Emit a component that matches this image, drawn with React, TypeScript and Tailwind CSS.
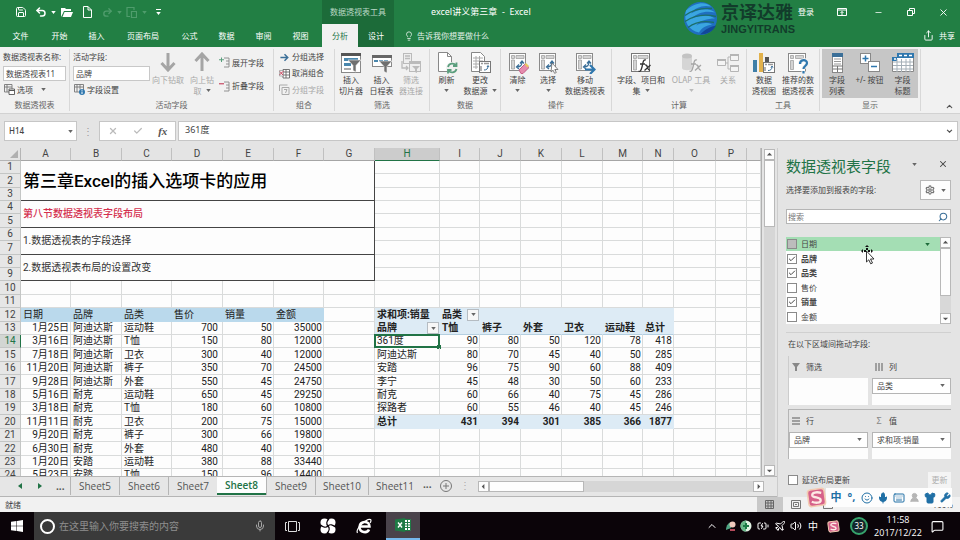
import { useState } from 'react';
import type { ReactNode } from 'react';
import clsx from 'clsx';
import {
  ChevronUp,
  Keyboard,
  Lightbulb,
  MessageSquare,
  Mic,
  Minus,
  Plane,
  Redo2,
  Save,
  Search,
  Settings,
  Share,
  Shirt,
  Smile,
  Undo2,
  UserRound,
  Volume2,
  Wrench,
  X,
  Check,
  BatteryCharging
} from 'lucide-react';

const columns = [
  { name: 'A', width: 'w-[50px]' },
  { name: 'B', width: 'w-[51px]' },
  { name: 'C', width: 'w-[50px]' },
  { name: 'D', width: 'w-[51px]' },
  { name: 'E', width: 'w-[51px]' },
  { name: 'F', width: 'w-[50px]' },
  { name: 'G', width: 'w-[51px]' },
  { name: 'H', width: 'w-[65px]' },
  { name: 'I', width: 'w-[40px]' },
  { name: 'J', width: 'w-[41px]' },
  { name: 'K', width: 'w-[41px]' },
  { name: 'L', width: 'w-[41px]' },
  { name: 'M', width: 'w-[40px]' },
  { name: 'N', width: 'w-[31px]' },
  { name: 'O', width: 'w-[42px]' },
  { name: 'P', width: 'w-[31px]' },
  { name: '', width: '' }
];

const salesHeader = ['日期', '品牌', '品类', '售价', '销量', '金额'];

const sales = [
  ['1月25日', '阿迪达斯', '运动鞋', 700, 50, 35000],
  ['3月16日', '阿迪达斯', 'T恤', 150, 80, 12000],
  ['7月18日', '阿迪达斯', '卫衣', 300, 40, 12000],
  ['11月20日', '阿迪达斯', '裤子', 350, 70, 24500],
  ['9月28日', '阿迪达斯', '外套', 550, 45, 24750],
  ['5月16日', '耐克', '运动鞋', 650, 45, 29250],
  ['3月18日', '耐克', 'T恤', 180, 60, 10800],
  ['11月11日', '耐克', '卫衣', 200, 75, 15000],
  ['9月20日', '耐克', '裤子', 300, 66, 19800],
  ['6月30日', '耐克', '外套', 480, 40, 19200],
  ['1月20日', '安踏', '运动鞋', 380, 88, 33440],
  ['5月23日', '安踏', 'T恤', 150, 96, 14400]
];

const pivotHeader = ['品牌', 'T恤', '裤子', '外套', '卫衣', '运动鞋', '总计'];

const pivot = [
  ['361度', 90, 80, 50, 120, 78, 418],
  ['阿迪达斯', 80, 70, 45, 40, 50, 285],
  ['安踏', 96, 75, 90, 60, 88, 409],
  ['李宁', 45, 48, 30, 50, 60, 233],
  ['耐克', 60, 66, 40, 75, 45, 286],
  ['探路者', 60, 55, 46, 40, 45, 246],
  ['总计', 431, 394, 301, 385, 366, 1877]
];

// Merged headings over A:G, keyed by their first row
const headings: Record<number, { text: string; span: number; className: string }> = {
  1: { text: '第三章Excel的插入选项卡的应用', span: 3, className: 'text-[17px] leading-5 font-medium text-black' },
  4: { text: '第八节数据透视表字段布局', span: 2, className: 'font-medium text-[#d4304f]' },
  6: { text: '1.数据透视表的字段选择', span: 2, className: 'text-[#333333]' },
  8: { text: '2.数据透视表布局的设置改变', span: 2, className: 'text-[#333333]' }
};

function Caret({ className = 'text-[#666666]' }: { className?: string }) {
  return (
    <svg viewBox="0 0 6 4" className={clsx('h-[3px] w-[5px] shrink-0', className)} aria-hidden="true">
      <path d="M0 0h6L3 4z" fill="currentColor" />
    </svg>
  );
}

/* ---------- Ribbon icons ---------- */

function Icon({ children, size = 'h-[22px] w-[22px]' }: { children: ReactNode; size?: string }) {
  return (
    <svg viewBox="0 0 22 22" fill="none" className={clsx('shrink-0', size)} aria-hidden="true">
      {children}
    </svg>
  );
}

function PivotBase() {
  return (
    <>
      <rect x="2.5" y="1.5" width="16" height="17" fill="#fff" stroke="#8a8a8a" />
      <path d="M4.500 3.500h3v3h-3zM9 3.500h8v3H9zM4.500 8h3v9h-3z" fill="#d4d4d4" stroke="#9a9a9a" strokeWidth=".7" />
      <path d="M10 15c3 0 5-1.500 5-5m-2 1.500L15 9l2 2.500M12 12.500 9.500 15l2.500 2" stroke="#3b6f98" strokeWidth="1.300" />
    </>
  );
}

const SlicerIcon = () => (
  <Icon>
    <rect x="1.5" y="1.500" width="19" height="19" fill="#fff" stroke="#888" />
    <path d="M1 1h20v3H1z" fill="#555" />
    <path d="M4 6h14v3H4zM4 11h7v3H4z" fill="#4a87ad" />
    <path d="M4 17h7" stroke="#aaa" strokeWidth="2" />
    <path d="M8 8h13l-5 5.500V20l-3-1.500v-5z" fill="#6f6f6f" stroke="#f1f1f1" strokeWidth=".6" />
  </Icon>
);

const TimelineIcon = () => (
  <Icon>
    <rect x="1.500" y="3.500" width="19" height="11" fill="#fff" stroke="#888" />
    <path d="M1 3h20v3H1z" fill="#666" />
    <path d="M3 9h4m1 0h4m1 0h4" stroke="#4a87ad" strokeWidth="2" />
    <path d="M8 9h13l-5 5.500V21l-3-1.500v-5z" fill="#6f6f6f" stroke="#f1f1f1" strokeWidth=".6" />
  </Icon>
);

const FilterLinkIcon = () => (
  <Icon>
    <rect x="3.500" y="1.500" width="8" height="10" fill="#eee" stroke="#bbb" />
    <path d="M5 4h5M5 6.500h5M2 9v7h6m-2-2 2 2-2 2" stroke="#bbb" strokeWidth="1.300" />
    <rect x="9.500" y="9.500" width="11" height="10" fill="#eee" stroke="#bbb" />
    <path d="M10 10h10v2H10zM12 14h8l-3 3v4l-2-1v-3z" fill="#bbb" />
  </Icon>
);

const RefreshIcon = () => (
  <Icon>
    <path d="M2.500.5h9l4 4v15h-13z" fill="#fff" stroke="#888" />
    <path d="M11.500.5v4h4" stroke="#888" />
    <circle cx="16" cy="16" r="6" fill="#f1f1f1" />
    <path d="M12 15a4.500 4.500 0 0 1 8-1.500m.5-3v3.500H17M20.500 17a4.500 4.500 0 0 1-8 1.500m-.5 3V18h3.500" stroke="#5a9e7d" strokeWidth="1.800" />
  </Icon>
);

const SourceIcon = () => (
  <Icon>
    <path d="M2.500.5h9l4 4v15h-13z" fill="#fff" stroke="#888" />
    <path d="M4 6h10M4 9h10M4 12h7M4 15h5M7 4v13M10.500 4v9" stroke="#aaa" />
    <rect x="10.500" y="9.500" width="11" height="11" fill="#fff" stroke="#777" />
    <path d="M12 11.500h2m1 0h5M12 14v5" stroke="#999" strokeWidth="1.500" />
    <path d="M15 18c2.500 0 4-1 4-4m-1 1 1-1.500 1 1.500" stroke="#3b6f98" />
  </Icon>
);

const ClearIcon = () => (
  <Icon>
    <PivotBase />
    <path d="m12 18 6-6 4 3.500-6 6h-2z" fill="#e58cae" stroke="#c45f86" />
    <path d="m17.500 12.500 1.500-1.500 3 3-1.500 1.500z" fill="#e8c65e" />
  </Icon>
);

const SelectIcon = () => (
  <Icon>
    <PivotBase />
    <path d="m15 11 6 6.500h-3.200l1.500 3-1.700.8-1.500-3L14 20z" fill="#fff" stroke="#666" strokeWidth=".8" />
  </Icon>
);

const MoveIcon = () => (
  <Icon>
    <PivotBase />
    <path d="M11 17.500h9m-4-4.500 4.500 4.500L16 22" stroke="#2f77ae" strokeWidth="2.200" />
  </Icon>
);

const FieldsIcon = () => (
  <Icon>
    <rect x="1.500" y="1.500" width="18" height="18" fill="#fff" stroke="#777" />
    <path d="M3.500 3.500h3v3h-3zM8 3.500h10v3H8zM3.500 8h3v10h-3z" fill="#d4d4d4" stroke="#9a9a9a" strokeWidth=".7" />
    <path d="M16 8c-3-1-3 3-4 7s-2 5-3.500 4M10 12h5M15 13c3-1 2 6 5 5M20.500 13l-6 5.500" stroke="#333" strokeWidth="1.300" />
  </Icon>
);

const OlapIcon = () => (
  <Icon>
    <path d="M2 4v12c0 3 10 3 10 0V4" fill="#d5d5d5" />
    <ellipse cx="7" cy="4" rx="5" ry="2.500" fill="#c3c3c3" />
    <path d="M17 8c-3-1-3 3-4 7s-2 5-3.500 4M11 12h5M16 13c3-1 2 6 5 5M21 13l-6 5.500" stroke="#a5a5a5" strokeWidth="1.300" />
  </Icon>
);

const RelationIcon = () => (
  <Icon>
    <path d="M8 11h3V5h2M11 11v6h2" stroke="#b5b5b5" />
    <path d="M.5 7.500h8v6h-8zM13.500 2.500h8v6h-8zM13.500 13.500h8v6h-8z" fill="#f4f4f4" stroke="#b5b5b5" />
    <path d="M0 7h9v2H0zM13 2h9v2h-9zM13 13h9v2h-9z" fill="#b5b5b5" />
  </Icon>
);

const ChartIcon = () => (
  <Icon>
    <path d="M0 8h4v12H0z" fill="#3f7fa8" />
    <path d="M6 1h4v19H6z" fill="#e2b14b" />
    <path d="M12 5h4v6h-4z" fill="#555" />
    <rect x="10.500" y="10.500" width="11" height="10" fill="#fff" stroke="#777" />
    <path d="M12 12.500h2m1 0h5M12 15v4" stroke="#999" strokeWidth="1.500" />
    <path d="M15 18.500c2.500 0 4-1 4-4m-1 1 1-1.500 1 1.500" stroke="#3b6f98" />
  </Icon>
);

const RecommendIcon = () => (
  <Icon>
    <rect x="1.500" y="1.500" width="17" height="18" fill="#fff" stroke="#888" />
    <path d="M3.500 3.500h3v3h-3zM8.500 3.500h8v3h-8zM3.500 8.500h3v9h-3z" fill="#d4d4d4" stroke="#999" strokeWidth=".7" />
    <path d="M13 12c0-5 7-5 7-1 0 3-3.500 3-3.500 6M16.500 19v2.500" stroke="#f1f1f1" strokeWidth="4" />
    <path d="M13 12c0-5 7-5 7-1 0 3-3.500 3-3.500 6M16.500 19v2.500" stroke="#2f77ae" strokeWidth="2.200" />
  </Icon>
);

const FieldListIcon = () => (
  <Icon>
    <rect x="6.500" y="1.500" width="10" height="19" fill="#fff" stroke="#888" />
    <path d="M6 1h11v4H6z" fill="#3b6f98" />
    <path d="M8 7h7M8 9.500h7M8 12h7" stroke="#999" />
    <path d="M6 14h11M11.500 14v6M7 17h10" stroke="#777" />
  </Icon>
);

const PlusMinusIcon = () => (
  <Icon>
    <rect x="1.500" y="1.500" width="10" height="10" fill="#fff" stroke="#888" />
    <rect x="9.500" y="9.500" width="11" height="10" fill="#fff" stroke="#888" />
    <path d="M6.500 3.500v6M3.500 6.500h6M12 14.500h6" stroke="#2f77ae" strokeWidth="1.500" />
  </Icon>
);

const FieldHeadersIcon = () => (
  <Icon>
    <path d="M.5 5.500h21v14H.5z" fill="#fff" stroke="#888" />
    <path d="M0 5h5V1h17v5H5v3H0z" fill="#2f77ae" />
    <path d="M7 3.500h3m2 0h3m2 0h3M2 7h2" stroke="#fff" strokeWidth="1.500" />
    <path d="M1 10h20M1 13.500h20M1 17h20M5 7v13M9.500 7v13M14 7v13M18 7v13" stroke="#a5b0b8" />
  </Icon>
);

const OptionsIcon = () => (
  <Icon size="h-[11px] w-[11px]">
    <path d="M1 1h15v15H1zM1 6h15M6 1v15" stroke="#777" strokeWidth="1.800" />
    <path d="M10 10h11v11H10z" fill="#fff" stroke="#555" strokeWidth="1.800" />
    <path d="M10 13h11" stroke="#555" strokeWidth="2" />
  </Icon>
);

const FieldSettingsIcon = () => (
  <Icon size="h-[11px] w-[11px]">
    <path d="M1 1h18v15H1zM1 6h18M6 1v15M12 1v10" stroke="#777" strokeWidth="1.800" />
    <circle cx="16" cy="16" r="6" fill="#2f77ae" />
    <path d="M16 15v5M16 11.500v2" stroke="#fff" strokeWidth="2" />
  </Icon>
);

function OutlineIcon({ plus }: { plus?: boolean }) {
  return (
    <Icon size="h-[11px] w-[11px]">
      <path d="M10 2h10M14 8h6M14 14h6M10 20h10M20 2v18" stroke="#888" strokeWidth="1.800" />
      {plus ? (
        <path d="M5 1v9M0 5.500h10" stroke="#5a9e7d" strokeWidth="2" />
      ) : (
        <path d="M0 5.500h10" stroke="#c8506a" strokeWidth="2.500" />
      )}
    </Icon>
  );
}

const GroupArrowIcon = () => (
  <Icon size="h-[9px] w-[9px]">
    <path d="M1 11h18M11 3l8 8-8 8" stroke="#3b6f98" strokeWidth="3.500" />
  </Icon>
);

const UngroupIcon = () => (
  <Icon size="h-[11px] w-[11px]">
    <path d="M8 3h13v17H8zM8 8h13M8 14h13M14 3v17" fill="#fff" stroke="#666" strokeWidth="1.800" />
    <path d="M1 5h8v11H1z" fill="#f1f1f1" stroke="#777" />
    <path d="m1 14 8-8M2 7l6 7" stroke="#c8405a" strokeWidth="2" />
  </Icon>
);

const GroupFieldIcon = () => (
  <Icon size="h-[11px] w-[11px]">
    <path d="M1 14V2h16M6 7h14v14H6z" stroke="#aaa" strokeWidth="2" />
    <path d="M10 11h6l-3 7" stroke="#aaa" strokeWidth="2" />
  </Icon>
);

function BigArrow({ up }: { up?: boolean }) {
  return (
    <svg viewBox="0 0 16 20" fill="none" className="mb-[2px] h-5 w-4" aria-hidden="true">
      {up ? (
        <path d="M8 19V3M1.500 9 8 2l6.500 7" stroke="#a5a5a5" strokeWidth="3" />
      ) : (
        <path d="M8 1v16M1.500 11 8 18l6.500-7" stroke="#a5a5a5" strokeWidth="3" />
      )}
    </svg>
  );
}

/* ---------- Ribbon parts ---------- */

function RibbonGroup({ label, width, children }: { label: string; width: string; children: ReactNode }) {
  return (
    <section aria-label={label} className={clsx('flex shrink-0 flex-col py-[2px]', width)}>
      <div className="flex min-h-0 flex-1 border-r border-[#d8d8d8]">{children}</div>
      <div className="h-[13px] border-r border-[#d8d8d8] text-center leading-[13px] text-[#666666]">{label}</div>
    </section>
  );
}

interface BigButtonProps {
  icon: ReactNode;
  lines: string[];
  width: string;
  disabled?: boolean;
  menu?: boolean;
}

function BigButton({ icon, lines, width, disabled, menu }: BigButtonProps) {
  return (
    <button
      disabled={disabled}
      className={clsx(
        'flex shrink-0 flex-col items-center pt-[3px] leading-[11px] whitespace-nowrap',
        width,
        disabled ? 'text-[#a8a8a8]' : 'text-[#444444]'
      )}
    >
      {icon}
      {lines.map((line, i) => (
        <span key={line} className="flex items-center gap-1">
          {line}
          {menu && lines.length === 2 && i === 1 && <Caret />}
        </span>
      ))}
      {menu && lines.length === 1 && (
        <span className="pt-1">
          <Caret className={disabled ? 'text-[#bbbbbb]' : 'text-[#666666]'} />
        </span>
      )}
    </button>
  );
}

function SmallButton({ icon, text, disabled, menu }: { icon: ReactNode; text: string; disabled?: boolean; menu?: boolean }) {
  return (
    <button
      disabled={disabled}
      className={clsx('flex items-center gap-[2px] whitespace-nowrap', disabled ? 'text-[#a8a8a8]' : 'text-[#444444]')}
    >
      <span className="flex w-[12px] justify-center">{icon}</span>
      {text}
      {menu && (
        <span className="pl-[6px]">
          <Caret />
        </span>
      )}
    </button>
  );
}

function Ribbon() {
  return (
    <div className="flex h-[67px] shrink-0 overflow-hidden border-b border-[#d2d2d2] bg-[#f1f1f1]">
      <RibbonGroup label="数据透视表" width="w-[70px]">
        <div className="flex w-full flex-col pt-[2px] pr-[3px] pl-[3px]">
          <label htmlFor="pivot-name" className="h-[15px] leading-[11px] whitespace-nowrap">数据透视表名称:</label>
          <input id="pivot-name" defaultValue="数据透视表11" className="h-[15px] w-full border border-[#c8c8c8] bg-white px-[2px]" />
          <div className="flex h-[17px] items-center">
            <SmallButton icon={<OptionsIcon />} text="选项" menu />
          </div>
        </div>
      </RibbonGroup>

      <RibbonGroup label="活动字段" width="w-[204px]">
        <div className="flex w-[80px] flex-col pt-[2px] pl-[3px]">
          <label htmlFor="active-field" className="h-[15px] leading-[11px]">活动字段:</label>
          <input id="active-field" defaultValue="品牌" className="h-[15px] w-full border border-[#c8c8c8] bg-white px-[2px]" />
          <div className="flex h-[17px] items-center">
            <SmallButton icon={<FieldSettingsIcon />} text="字段设置" />
          </div>
        </div>
        <BigButton icon={<BigArrow />} lines={['向下钻取']} width="w-[36px]" disabled />
        <BigButton icon={<BigArrow up />} lines={['向上钻', '取']} width="w-[32px]" disabled menu />
        <div className="flex flex-col justify-around pt-[2px]">
          <SmallButton icon={<OutlineIcon plus />} text="展开字段" />
          <SmallButton icon={<OutlineIcon />} text="折叠字段" />
        </div>
      </RibbonGroup>

      <RibbonGroup label="组合" width="w-[61px]">
        <div className="flex flex-col justify-around pl-[4px]">
          <SmallButton icon={<GroupArrowIcon />} text="分组选择" />
          <SmallButton icon={<UngroupIcon />} text="取消组合" />
          <SmallButton icon={<GroupFieldIcon />} text="分组字段" disabled />
        </div>
      </RibbonGroup>

      <RibbonGroup label="筛选" width="w-[95px]">
        <BigButton icon={<SlicerIcon />} lines={['插入', '切片器']} width="w-[32px]" />
        <BigButton icon={<TimelineIcon />} lines={['插入', '日程表']} width="w-[29px]" />
        <BigButton icon={<FilterLinkIcon />} lines={['筛选', '器连接']} width="w-[30px]" disabled />
      </RibbonGroup>

      <RibbonGroup label="数据" width="w-[71px]">
        <BigButton icon={<RefreshIcon />} lines={['刷新']} width="w-[33px]" menu />
        <BigButton icon={<SourceIcon />} lines={['更改', '数据源']} width="w-[34px]" menu />
      </RibbonGroup>

      <RibbonGroup label="操作" width="w-[111px]">
        <BigButton icon={<ClearIcon />} lines={['清除']} width="w-[33px]" menu />
        <BigButton icon={<SelectIcon />} lines={['选择']} width="w-[28px]" menu />
        <BigButton icon={<MoveIcon />} lines={['移动', '数据透视表']} width="w-[46px]" />
      </RibbonGroup>

      <RibbonGroup label="计算" width="w-[135px]">
        <BigButton icon={<FieldsIcon />} lines={['字段、项目和', '集']} width="w-[58px]" menu />
        <BigButton icon={<OlapIcon />} lines={['OLAP 工具']} width="w-[42px]" disabled menu />
        <BigButton icon={<RelationIcon />} lines={['关系']} width="w-[32px]" disabled />
      </RibbonGroup>

      <RibbonGroup label="工具" width="w-[73px]">
        <BigButton icon={<ChartIcon />} lines={['数据', '透视图']} width="w-[34px]" />
        <BigButton icon={<RecommendIcon />} lines={['推荐的数', '据透视表']} width="w-[34px]" />
      </RibbonGroup>

      <RibbonGroup label="显示" width="w-[101px]">
        <div className="mx-[2px] flex bg-[#c6c6c6]">
          <BigButton icon={<FieldListIcon />} lines={['字段', '列表']} width="w-[30px]" />
          <BigButton icon={<PlusMinusIcon />} lines={['+/- 按钮']} width="w-[35px]" />
          <BigButton icon={<FieldHeadersIcon />} lines={['字段', '标题']} width="w-[31px]" />
        </div>
      </RibbonGroup>

      <button aria-label="折叠功能区" className="mt-auto mr-[6px] mb-[2px] ml-auto text-[#555555]">
        <ChevronUp size={9} strokeWidth={3} />
      </button>
    </div>
  );
}

/* ---------- Title bar and tabs ---------- */

function TitleBar() {
  return (
    <div className="flex h-6 items-center text-white">
      <div className="flex w-[322px] shrink-0 items-center pl-[15px]">
        <button aria-label="保存"><Save size={12} /></button>
        <button aria-label="撤消" className="ml-[8px] flex items-center gap-[4px]">
          <Undo2 size={12} strokeWidth={3} />
          <Caret className="text-white" />
        </button>
        <button aria-label="打开" className="ml-[5px]">
          <svg viewBox="0 0 12 10" className="h-[10px] w-[12px]" aria-hidden="true">
            <path d="M0 10V1h4l1 1h5v2H3z" fill="currentColor" />
            <path d="M3.500 5H12l-2 5H1.500z" fill="currentColor" />
          </svg>
        </button>
        <button aria-label="新建" className="ml-[10px]">
          <svg viewBox="0 0 9 12" fill="none" className="h-[12px] w-[9px]" aria-hidden="true">
            <path d="M.5.5H5L8.500 4v7.500h-8zM5 .5V4h3.500" stroke="currentColor" />
          </svg>
        </button>
        <button aria-label="恢复" disabled className="ml-[10px] flex items-center gap-[4px] text-[#4f9c6c]">
          <Redo2 size={11} strokeWidth={3} />
          <Caret className="text-[#4f9c6c]" />
        </button>
        <button aria-label="粘贴" disabled className="ml-[4px] flex items-center gap-[5px] text-[#4f9c6c]">
          <svg viewBox="0 0 11 12" fill="none" className="h-[12px] w-[11px]" aria-hidden="true">
            <path d="M4 10.500H1v-9h7V4M3 1.500h3M5.500 5.500h5v6h-5z" stroke="currentColor" strokeWidth="1.200" />
          </svg>
          <Caret className="text-[#4f9c6c]" />
        </button>
        <button aria-label="自定义快速访问工具栏" className="ml-[9px] flex flex-col items-center gap-[2px]">
          <span className="h-px w-[5px] bg-white" />
          <Caret className="text-white" />
        </button>
      </div>
      <div className="flex h-6 w-[72px] shrink-0 items-center justify-center bg-[#1c6b39] text-[#b9d8c5]">数据透视表工具</div>
      <h1 className="flex-1 pl-[37px] text-[9px] whitespace-pre">excel讲义第三章  -  Excel</h1>
      <button className="mr-[23px]">登录</button>
      <button aria-label="功能区显示选项" className="mr-[27px]">
        <svg viewBox="0 0 10 8" fill="none" className="h-2 w-[10px]" aria-hidden="true">
          <path d="M.5.5h9v7h-9zM.5 2h9M5 7V3.500M3.500 5 5 3.500 6.500 5" stroke="currentColor" />
        </svg>
      </button>
      <button aria-label="最小化" className="mr-[24px]"><Minus size={9} /></button>
      <button aria-label="向下还原" className="mr-[23px]">
        <svg viewBox="0 0 8 8" fill="none" className="h-2 w-2" aria-hidden="true">
          <path d="M.5 2.500h5v5h-5zM2.500 2V.5h5v5H6" stroke="currentColor" />
        </svg>
      </button>
      <button aria-label="关闭" className="mr-[11px]"><X size={11} /></button>
    </div>
  );
}

function MenuTabs() {
  return (
    <nav className="flex h-[23px] items-stretch text-white">
      <button className="w-[41px]">文件</button>
      <button className="w-[37px]">开始</button>
      <button className="w-[37px]">插入</button>
      <button className="w-[56px]">页面布局</button>
      <button className="w-[37px]">公式</button>
      <button className="w-[37px]">数据</button>
      <button className="w-[37px]">审阅</button>
      <button className="mr-[3px] w-[37px]">视图</button>
      <button className="w-[36px] bg-[#f1f1f1] text-[#217346]">分析</button>
      <button className="w-[36px] bg-[#1c6b39]">设计</button>
      <button className="ml-[10px] flex items-center gap-[3px] text-[#e3f1e8]">
        <Lightbulb size={10} />
        告诉我你想要做什么
      </button>
      <button className="mr-[5px] ml-auto flex items-center gap-[5px]">
        <Share size={11} />
        共享
      </button>
    </nav>
  );
}

function Watermark() {
  return (
    <div className="absolute top-0 right-[165px] flex items-center gap-[3px] text-[#123c2b]">
      <svg viewBox="0 0 35 35" className="h-[36px] w-[35px]" aria-hidden="true">
        <circle cx="17.500" cy="18" r="16.500" fill="#1f6fc0" />
        <path d="M3 10C12 1 24 1 28 6 20 4 12 7 8 13c8-5 18-6 24-1-9-2-18 0-23 6 8-4 17-4 23 0-8 0-15 2-19 7 6-3 12-3 16-1-6 1-10 3-13 8C6 30 0 21 3 10z" fill="#3aa6e0" />
        <path d="M2 15c8-6 16-8 27-7M2 21c9-6 19-8 31-5M5 27c8-6 16-7 26-5" stroke="#1c6f6a" strokeWidth="1.300" fill="none" />
        <path d="M17 34c6-6 11-8 16-9-3 6-9 9-16 9z" fill="#12479a" />
      </svg>
      <div className="flex flex-col">
        <span className="text-[18px] leading-[22px] font-bold">京译达雅</span>
        <span className="font-['Liberation_Sans'] text-[11px] leading-[12px] font-bold">JINGYITRANS</span>
      </div>
    </div>
  );
}

/* ---------- Formula bar ---------- */

function FormulaBar() {
  return (
    <div className="flex h-[34px] shrink-0 items-start bg-[#e4e4e4] pt-[7px] pr-[2px] pl-[4px]">
      <div className="flex h-[20px] w-[73px] items-center border border-[#c6c6c6] bg-white pr-[3px]">
        <input aria-label="名称框" defaultValue="H14" className="min-w-0 flex-1 pl-[4px] font-medium" />
        <Caret />
      </div>
      <span className="flex h-[20px] w-[22px] items-center justify-center text-[10px] text-[#999999]">⋮</span>
      <div className="flex h-[20px] w-[77px] items-center justify-around border border-[#c6c6c6] bg-white text-[#bbbbbb]">
        <button aria-label="取消"><X size={10} strokeWidth={3} /></button>
        <button aria-label="输入"><Check size={10} strokeWidth={3} /></button>
        <button className="font-['Liberation_Serif'] text-[11px] font-bold text-[#555555] italic">fx</button>
      </div>
      <div className="ml-[2px] flex h-[20px] flex-1 items-center border border-[#c6c6c6] bg-white pr-[4px]">
        <input aria-label="编辑栏" defaultValue="361度" className="min-w-0 flex-1 pb-[3px] pl-[6px] text-[9px]" />
        <svg viewBox="0 0 8 5" fill="none" className="h-[4px] w-[7px]" aria-hidden="true">
          <path d="m1 1 3 3 3-3" stroke="#555" strokeWidth="1.500" />
        </svg>
      </div>
    </div>
  );
}

/* ---------- Sheet ---------- */

function FilterButton({ label }: { label: string }) {
  return (
    <button aria-label={label} className="flex size-[12px] shrink-0 items-center justify-center border border-[#b5bcc2] bg-[#f7f7f7]">
      <Caret />
    </button>
  );
}

const grid = 'border-[#d9dbdb]';

function salesCell(row: number, col: number) {
  if (col === 6 || row < 12) {
    return <td key={col} className={clsx('border-r border-b', grid)} />;
  }
  if (row === 12) {
    return (
      <td key={col} className="border-r border-b border-[#bad9ec] bg-[#bad9ec] pl-[2px]">
        {salesHeader[col]}
      </td>
    );
  }
  return (
    <td
      key={col}
      className={clsx(
        'border-r border-b',
        grid,
        col === 1 || col === 2 ? 'pl-[2px]' : 'text-right',
        col === 3 ? 'pr-[4px]' : 'pr-px'
      )}
    >
      {sales[row - 13][col]}
    </td>
  );
}

function pivotCell(row: number, col: number) {
  const i = col - 7;
  if (row < 12 || row > 20 || i > 6) {
    return <td key={col} className={clsx('border-r border-b', grid)} />;
  }
  if (row === 12) {
    return (
      <td key={col} className="border-r border-b border-[#ddebf5] bg-[#ddebf5] pl-[2px] font-bold">
        {i === 0 && '求和项:销量'}
        {i === 1 && (
          <span className="flex items-center justify-between">
            品类
            <FilterButton label="筛选品类" />
          </span>
        )}
      </td>
    );
  }
  if (row === 13) {
    return (
      <td key={col} className="border-r border-b border-[#ddebf5] border-b-[#b4cfe0] bg-[#ddebf5] pl-[2px] font-bold">
        <span className="flex items-center justify-between">
          {pivotHeader[i]}
          {i === 0 && <FilterButton label="筛选品牌" />}
        </span>
      </td>
    );
  }
  const total = row === 20;
  return (
    <td
      key={col}
      className={clsx(
        'border-r border-b',
        i === 0 ? 'relative pl-[2px]' : 'pr-px text-right',
        total ? 'border-[#ddebf5] bg-[#ddebf5] font-bold' : grid
      )}
    >
      {pivot[row - 14][i]}
      {row === 14 && i === 0 && (
        <span className="absolute -top-px -right-px -bottom-px -left-px border-2 border-[#217346]">
          <span className="absolute -right-[3px] -bottom-[3px] size-[4px] bg-[#217346]" />
        </span>
      )}
    </td>
  );
}

function SheetRow({ row }: { row: number }) {
  const heading = headings[row];
  const covered = row < 10;
  return (
    <tr className={row % 5 === 2 || row % 5 === 0 ? 'h-[14px]' : 'h-[13px]'}>
      <th
        scope="row"
        className={clsx(
          'border-r border-b border-[#c4c6c5] font-normal',
          row === 14 ? 'border-r-[#217346] bg-[#d2d6d3] text-[#217346]' : 'bg-[#e6e6e6] text-[#444444]'
        )}
      >
        {row}
      </th>
      {heading && (
        <td colSpan={7} rowSpan={heading.span} className={clsx('border-r border-b border-[#444444] bg-[#fdfdfd] pl-[2px]', heading.className)}>
          {heading.text}
        </td>
      )}
      {!covered && columns.slice(0, 7).map((_, i) => salesCell(row, i))}
      {columns.slice(7).map((_, i) => pivotCell(row, i + 7))}
    </tr>
  );
}

function Sheet() {
  return (
    <div className="min-h-0 flex-1 overflow-hidden border-r border-[#b0b0b0] bg-[#fdfdfd]">
      <table className="w-full table-fixed border-separate border-spacing-0 font-['Roboto','Noto_Sans_CJK_SC',sans-serif] text-[10px] leading-[12px] whitespace-nowrap text-[#222222]">
        <colgroup>
          <col className="w-[21px]" />
          {columns.map((c, i) => (
            <col key={i} className={c.width} />
          ))}
        </colgroup>
        <thead>
          <tr className="h-[13px] bg-[#e4e4e4] text-[#444444]">
            <th className="border-r border-b border-[#b5b5b5]">
              <svg viewBox="0 0 8 8" className="mr-[2px] ml-auto h-2 w-2" aria-hidden="true">
                <path d="M8 0v8H0z" fill="#b0b0b0" />
              </svg>
            </th>
            {columns.map((c, i) => (
              <th
                key={i}
                scope="col"
                className={clsx(
                  'border-r border-b font-normal',
                  c.name === 'H'
                    ? 'border-r-[#c0c0c0] border-b-[#217346] bg-[#cccccc] text-[#217346]'
                    : 'border-r-[#c0c0c0] border-b-[#a5a5a5]'
                )}
              >
                {c.name}
              </th>
            ))}
          </tr>
        </thead>
        <tbody>
          {Array.from({ length: 24 }, (_, i) => (
            <SheetRow key={i} row={i + 1} />
          ))}
        </tbody>
      </table>
    </div>
  );
}

function ScrollArrow({ dir, label }: { dir: 'up' | 'down' | 'left' | 'right'; label: string }) {
  const paths = { up: 'M1 5h6L4 2z', down: 'M1 3h6L4 6z', left: 'M5 1v6L2 4z', right: 'M3 1v6l3-3z' };
  return (
    <button aria-label={label} className="flex size-[11px] shrink-0 items-center justify-center border border-[#b8b8b8] bg-[#fdfdfd]">
      <svg viewBox="0 0 8 8" className="size-[7px]" aria-hidden="true">
        <path d={paths[dir]} fill="#555" />
      </svg>
    </button>
  );
}

function SheetTabs() {
  const [active, setActive] = useState('Sheet8');
  const sheets = ['Sheet5', 'Sheet6', 'Sheet7', 'Sheet8', 'Sheet9', 'Sheet10', 'Sheet11'];
  return (
    <div className="flex h-[21px] shrink-0 items-start border-t border-b border-[#b5b5b5] bg-[#e6e6e6] font-['Open_Sans'] text-[10px] text-[#555555]">
      <div className="flex h-[18px] w-[70px] shrink-0 items-center pl-[17px]">
        <button aria-label="上一个工作表">
          <svg viewBox="0 0 6 6" className="size-[6px]"><path d="M5 0v6L1 3z" fill="#217346" /></svg>
        </button>
        <button aria-label="下一个工作表" className="ml-[14px]">
          <svg viewBox="0 0 6 6" className="size-[6px]"><path d="M1 0v6l4-3z" fill="#217346" /></svg>
        </button>
        <span className="ml-[13px] font-bold">...</span>
      </div>
      {sheets.map((name) => (
        <button
          key={name}
          onClick={() => setActive(name)}
          className={clsx(
            'h-[18px] shrink-0',
            name.length > 6 ? 'w-[53px]' : 'w-[49px]',
            name === active
              ? 'border-b-2 border-[#217346] bg-[#fdfdfd] font-semibold text-[#217346]'
              : 'border-l border-[#b5b5b5]'
          )}
        >
          {name}
        </button>
      ))}
      <span className="pl-[2px] font-bold">...</span>
      <button aria-label="新工作表" className="mt-[3px] ml-[8px]">
        <svg viewBox="0 0 12 12" fill="none" className="size-[12px]">
          <path d="M6 3v6M3 6h6M6 .5a5.500 5.500 0 1 0 0 11 5.500 5.500 0 0 0 0-11z" stroke="#777" />
        </svg>
      </button>
      <span className="w-[26px] shrink-0 pt-px text-center text-[#aaaaaa]">⋮</span>
      <div className="mt-[4px] mr-[13px] flex min-w-0 flex-1 bg-[#d6d6d6]">
        <ScrollArrow dir="left" label="向左滚动" />
        <div className="h-[11px] w-1/3 border border-[#b8b8b8] bg-[#fdfdfd]" />
        <div className="flex-1" />
        <ScrollArrow dir="right" label="向右滚动" />
      </div>
    </div>
  );
}

/* ---------- Field pane ---------- */

const fields = [
  { name: '日期', checked: false },
  { name: '品牌', checked: true },
  { name: '品类', checked: true },
  { name: '售价', checked: false },
  { name: '销量', checked: true },
  { name: '金额', checked: false }
];

function CheckBox({ checked, onChange, muted }: { checked: boolean; onChange: () => void; muted?: boolean }) {
  return (
    <span className="relative flex size-[10px]">
      <input
        type="checkbox"
        checked={checked}
        onChange={onChange}
        className={clsx('size-[10px] appearance-none border border-[#8a8a8a]', muted ? 'bg-[#bcbcbc]' : 'bg-white')}
      />
      {checked && <Check size={8} strokeWidth={3} className="pointer-events-none absolute top-px left-px text-[#444444]" />}
    </span>
  );
}

function AreaSelect({ label, value }: { label: string; value: string }) {
  return (
    <div className="relative">
      <select aria-label={label} className="block h-[16px] w-full appearance-none border border-[#b5b5b5] bg-white pl-[4px] text-[#444444]">
        <option>{value}</option>
      </select>
      <span className="pointer-events-none absolute top-[6px] right-[6px]">
        <Caret />
      </span>
    </div>
  );
}

function Area({ icon, title, value }: { icon: ReactNode; title: string; value?: string }) {
  return (
    <div className="flex min-w-0 flex-1 flex-col">
      <div className="flex h-[22px] items-center gap-[6px] pl-[3px]">
        <span className="flex w-[8px] justify-center text-[#888888]">{icon}</span>
        {title}
      </div>
      <div className="h-[27px] bg-[#fdfdfd]">{value && <AreaSelect label={title} value={value} />}</div>
    </div>
  );
}

function FieldPane() {
  const [checked, setChecked] = useState(fields.map((f) => f.checked));
  const [deferred, setDeferred] = useState(false);

  const toggle = (i: number) => setChecked(checked.map((c, n) => (n === i ? !c : c)));

  return (
    <aside className="flex w-[183px] shrink-0 flex-col border-l border-[#cccccc] bg-[#e4e4e4] pr-[9px] pl-[8px] text-[#444444]">
      <div className="flex items-center pt-[6px]">
        <h2 className="text-[15px] leading-[24px] text-[#217346]">数据透视表字段</h2>
        <button aria-label="任务窗格选项" className="ml-auto pb-[4px]"><Caret /></button>
        <button aria-label="关闭窗格" className="mr-[3px] ml-[21px] pb-[5px]"><X size={10} strokeWidth={2.500} /></button>
      </div>
      <div className="flex h-[24px] items-center justify-between">
        <span>选择要添加到报表的字段:</span>
        <button aria-label="工具" className="flex h-[20px] w-[31px] items-center justify-center gap-[6px] border border-[#b8b8b8] bg-[#fdfdfd] text-[#777777]">
          <Settings size={10} strokeWidth={3} />
          <Caret />
        </button>
      </div>
      <div className="mt-[7px] flex h-[15px] items-center border border-[#b5b5b5] bg-white pr-[2px]">
        <input aria-label="搜索字段" placeholder="搜索" className="min-w-0 flex-1 pl-[1px] placeholder:text-[#777777]" />
        <Search size={10} className="-scale-x-100 text-[#3b6f98]" strokeWidth={2.500} />
      </div>

      <div className="mt-[13px] flex h-[87px] bg-[#fdfdfd]">
        <ul className="flex-1">
          {fields.map((field, i) => (
            <li key={field.name} className={clsx('flex items-center pr-[10px]', i % 2 === 0 ? 'h-[14px]' : 'h-[15px]', i === 0 && 'bg-[#a4deb4]')}>
              <label className={clsx('flex items-center gap-[4px] pl-px', checked[i] && 'font-bold')}>
                <CheckBox checked={checked[i]} onChange={() => toggle(i)} muted={i === 0} />
                {field.name}
              </label>
              {i === 0 && (
                <button aria-label="筛选日期" className="ml-auto">
                  <Caret className="text-[#1d6b3a]" />
                </button>
              )}
            </li>
          ))}
        </ul>
        <div className="flex w-[11px] flex-col bg-[#d8d8d8]">
          <ScrollArrow dir="up" label="向上滚动字段" />
          <div className="h-[48px] border border-[#b8b8b8] bg-[#fdfdfd]" />
          <div className="flex-1" />
          <ScrollArrow dir="down" label="向下滚动字段" />
        </div>
      </div>

      <div className="mt-[8px] border-t border-[#d0d0d0] pt-[4px] pl-[2px] leading-[13px]">在以下区域间拖动字段:</div>
      <div className="mt-[6px] ml-[2px] flex gap-[4px] border-l border-[#cccccc]">
        <Area
          icon={<svg viewBox="0 0 8 8" className="size-2"><path d="M0 0h8L5 4v4H3V4z" fill="currentColor" /></svg>}
          title="筛选"
        />
        <Area
          icon={<svg viewBox="0 0 8 8" className="size-2"><path d="M1 0v8M4 0v8M7 0v8" stroke="currentColor" strokeWidth="1.500" /></svg>}
          title="列"
          value="品类"
        />
      </div>
      <div className="mt-[4px] ml-[2px] flex gap-[4px] border-t border-l border-[#b5b5b5]">
        <Area
          icon={<svg viewBox="0 0 8 8" className="size-2"><path d="M0 1h8M0 4h8M0 7h8" stroke="currentColor" strokeWidth="1.500" /></svg>}
          title="行"
          value="品牌"
        />
        <Area icon={<span className="text-[9px]">Σ</span>} title="值" value="求和项:销量" />
      </div>
      <div className="mt-[12px] flex h-[17px] items-center justify-between pl-[2px]">
        <label className="flex items-center gap-[4px]">
          <CheckBox checked={deferred} onChange={() => setDeferred(!deferred)} />
          延迟布局更新
        </label>
        <button disabled className="h-[16px] w-[23px] bg-[#f4f4f4] text-[#b0b0b0]">更新</button>
      </div>
    </aside>
  );
}

/* ---------- Status bar, input method bar and taskbar ---------- */

function SogouLogo({ className }: { className: string }) {
  return (
    <svg viewBox="0 0 20 20" fill="none" className={className} aria-hidden="true">
      <rect x="2" y="2" width="16" height="16" rx="3" fill="#d6618a" stroke="#f3cbb2" strokeWidth="1.500" transform="rotate(-8 10 10)" />
      <path d="M14.500 5.500C10 4.500 5.500 5 6 8c.5 2.500 8 1.500 8 4.500 0 3-5 3-8.500 1.500" stroke="#fde9e4" strokeWidth="2.200" />
    </svg>
  );
}

function InputMethodBar() {
  return (
    <div className="absolute right-[8px] bottom-[33px] flex h-[19px] items-center bg-[#fdfdfd] pr-px text-[#1f6fa5]">
      <SogouLogo className="-ml-[20px] size-[21px]" />
      <div className="flex items-center gap-[4px] pl-[3px]">
        <button className="w-[12px] text-[11px] font-bold">中</button>
        <button className="w-[11px] text-[11px] font-bold">°,</button>
        <button aria-label="表情"><Smile size={12} /></button>
        <button aria-label="语音"><Mic size={12} fill="currentColor" /></button>
        <button aria-label="软键盘"><Keyboard size={12} /></button>
        <button aria-label="登录输入法" className="text-[#b5b5b5]"><UserRound size={11} fill="currentColor" /></button>
        <button aria-label="皮肤"><Shirt size={12} fill="currentColor" /></button>
        <button aria-label="工具箱"><Wrench size={11} fill="currentColor" /></button>
      </div>
    </div>
  );
}

function StatusBar() {
  return (
    <div className="flex h-[15px] shrink-0 items-center bg-[#f1f1f1] pl-[5px] text-[#444444]">
      <span>就绪</span>
      <button aria-label="普通" className="ml-auto flex h-[15px] w-[26px] items-center justify-center bg-[#c8c8c8]">
        <svg viewBox="0 0 9 9" fill="none" className="size-[9px]">
          <path d="M.5.5h8v8h-8zM.5 3h8M.5 6h8M3 .5v8M6 .5v8" stroke="#666" />
        </svg>
      </button>
      <button aria-label="页面布局" className="ml-[8px]">
        <svg viewBox="0 0 10 9" fill="none" className="h-[9px] w-[10px]">
          <path d="M.5.5h9v8h-9zM2.500 2.500h5v4h-5zM4 4.500h2" stroke="#777" />
        </svg>
      </button>
      <button aria-label="分页预览" className="ml-[22px]">
        <svg viewBox="0 0 10 9" fill="none" className="h-[9px] w-[10px]">
          <path d="M.5.5h9v8h-9z" stroke="#777" />
        </svg>
      </button>
      <span className="mr-[7px] ml-[100px]">100%</span>
    </div>
  );
}

function Taskbar() {
  return (
    <footer className="flex h-[28px] shrink-0 items-center bg-[#0b0409] text-white">
      <button aria-label="开始" className="flex w-[34px] justify-center">
        <svg viewBox="0 0 12 12" className="size-[12px]">
          <path d="M0 1.800 5.500 1v4.700H0zM6 .9 12 0v5.700H6zM0 6.300h5.500V11L0 10.200zM6 6.300h6V12l-6-.9z" fill="#fff" />
        </svg>
      </button>
      <div className="flex h-full w-[241px] items-center bg-[#3a3a3a] pr-[9px] pl-[6px]">
        <span className="size-[15px] rounded-full border-2 border-white" />
        <input
          aria-label="搜索"
          placeholder="在这里输入你要搜索的内容"
          className="min-w-0 flex-1 pl-[4px] text-[10px] placeholder:text-[#8f8f8f]"
        />
        <Mic size={12} className="text-[#a5a5a5]" />
      </div>
      <button aria-label="任务视图" className="ml-[10px]">
        <svg viewBox="0 0 15 11" fill="none" className="h-[11px] w-[15px]">
          <path d="M3.500.5h8v10h-8zM2 1.500H.5v8H2M13 1.500h1.500v8H13" stroke="#ddd" />
        </svg>
      </button>
      <button aria-label="浏览器" className="ml-[20px]">
        <svg viewBox="0 0 16 16" className="size-[16px]">
          <circle cx="4.500" cy="4.500" r="4" fill="#fff" />
          <circle cx="11.500" cy="4.500" r="4" fill="#fff" />
          <circle cx="11.500" cy="11.500" r="4" fill="#fff" />
          <circle cx="4.500" cy="11.500" r="4" fill="#fff" />
          <path d="M8 8C6 6 6.500 3 9 1M8 8c2-2 5-1.500 7 1M8 8c2 2 1.500 5-1 7M8 8c-2 2-5 1.500-7-1" stroke="#0b0409" strokeWidth="1.200" fill="none" />
        </svg>
      </button>
      <button aria-label="Internet Explorer" className="ml-[20px]">
        <svg viewBox="0 0 16 16" fill="none" className="size-[16px]">
          <path d="M4 8.500h9.500C13.500 2.500 3.500 2 3.500 9c0 6 8 6.500 9.500 2.500" stroke="#fff" strokeWidth="2.500" />
          <path d="M1.500 15C-1 11 11 0 14.500 1.500c.8.5.5 2-.5 3.500" stroke="#fff" strokeWidth="1.200" />
        </svg>
      </button>
      <button aria-label="Excel" className="ml-[14px] flex h-full w-[34px] items-center justify-center border-b-2 border-[#76b9ed] bg-[#4a434b]">
        <svg viewBox="0 0 16 14" fill="none" className="h-[14px] w-[16px]">
          <path d="M9 1.500h6.500v11H9z" fill="#fff" stroke="#1f7a45" />
          <path d="M10 4.500h5M10 7h5M10 9.500h5M12.500 2v10" stroke="#1f7a45" />
          <path d="M0 1.500 10 0v14L0 12.500z" fill="#1f7a45" />
          <path d="m3 4.500 4 5M7 4.500l-4 5" stroke="#fff" strokeWidth="1.400" />
        </svg>
      </button>

      <div className="mr-[16px] ml-auto flex items-center">
        <button aria-label="显示隐藏的图标"><ChevronUp size={12} /></button>
        <svg viewBox="0 0 11 11" className="ml-[7px] size-[11px]" aria-hidden="true">
          <path d="M1 9c0-5 3-8 6-8l-1 6z" fill="#4fa583" />
          <circle cx="7.500" cy="3.500" r="3" fill="#efc9bd" />
          <path d="M5 8h5v2H5z" fill="#b54a5a" />
        </svg>
        <svg viewBox="0 0 12 12" className="ml-[4px] size-[12px]" aria-hidden="true">
          <circle cx="6" cy="6" r="5.500" fill="#e2f3e4" />
          <path d="M6 .5A5.500 5.500 0 0 0 6 11.500z" fill="#69b98a" />
          <path d="M6 3v6M3 6h6" stroke="#1d7a46" strokeWidth="2" />
        </svg>
        <BatteryCharging size={12} className="ml-[5px]" />
        <Plane size={12} className="ml-[5px]" />
        <Volume2 size={12} className="ml-[4px]" />
        <span className="ml-[6px] text-[10px]">中</span>
        <SogouLogo className="ml-[9px] size-[13px]" />
        <span className="ml-[10px] flex size-[18px] items-center justify-center rounded-full border-2 border-[#36a46c] bg-[#13262a] text-[8px]">33</span>
        <div className="ml-[5px] flex w-[50px] flex-col items-center font-['Open_Sans'] text-[9px] leading-[13px]">
          <span>11:58</span>
          <span>2017/12/22</span>
        </div>
        <button aria-label="通知" className="ml-[8px]"><MessageSquare size={13} /></button>
      </div>
    </footer>
  );
}

function DragCursor() {
  return (
    <svg viewBox="0 0 14 20" className="pointer-events-none absolute top-[245px] right-[85px] h-[20px] w-[14px]" aria-hidden="true">
      <path d="M6 0 8 2H4zM0 6l2-2v4zM12 6l-2-2v4zM5 3h2v2H5zM3 5h2v2H3zM7 5h2v2H7z" fill="#111" />
      <path d="m5.500 6 7.500 8H9.500l2 4-1.800.8-1.900-4-2.300 2.200z" fill="#fff" stroke="#222" strokeWidth=".9" />
    </svg>
  );
}

export default function App() {
  return (
    <div className="relative flex h-screen flex-col overflow-hidden bg-[#e4e4e4] font-['Noto_Sans','Noto_Sans_CJK_SC',sans-serif] text-[8px] text-[#444444]">
      <header className="relative shrink-0 bg-[#227f44]">
        <TitleBar />
        <MenuTabs />
        <Watermark />
      </header>
      <Ribbon />
      <FormulaBar />
      <main className="flex min-h-0 flex-1">
        <div className="flex min-w-0 flex-1 flex-col">
          <div className="flex min-h-0 flex-1">
            <Sheet />
            <div className="mt-px mr-[2px] ml-[2px] flex w-[11px] flex-col bg-[#d6d6d6]">
              <ScrollArrow dir="up" label="向上滚动" />
              <div className="h-[67px] border border-[#b8b8b8] bg-[#fdfdfd]" />
              <div className="flex-1" />
              <ScrollArrow dir="down" label="向下滚动" />
            </div>
          </div>
          <SheetTabs />
        </div>
        <FieldPane />
      </main>
      <StatusBar />
      <Taskbar />
      <InputMethodBar />
      <DragCursor />
    </div>
  );
}
